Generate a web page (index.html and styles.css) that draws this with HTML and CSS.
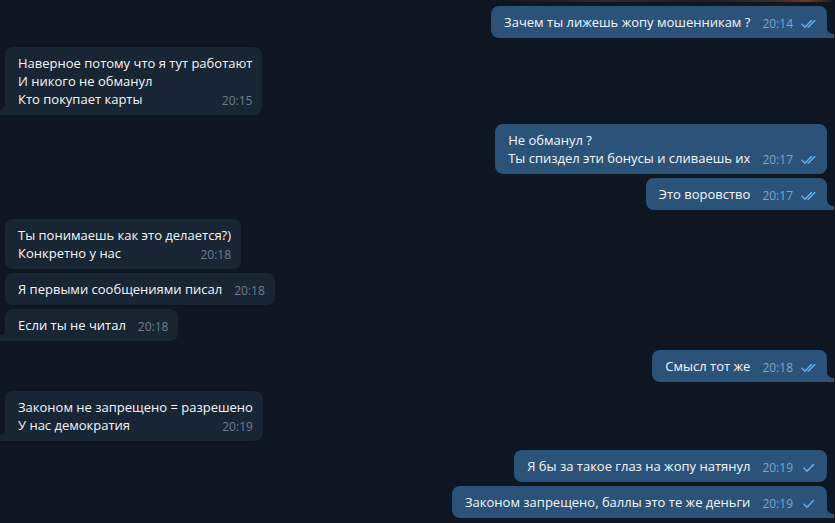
FILE: index.html
```html
<!DOCTYPE html>
<html lang="ru">
<head>
<meta charset="utf-8">
<title>Chat</title>
<link rel="stylesheet" href="styles.css">
</head>
<body>
<div class="chat">
  <div class="media-strip"></div>

  <div class="msg out tail">
    <div class="text">Зачем ты лижешь жопу мошенникам ?<span class="meta"><span class="time">20:14</span><svg class="check" viewBox="0 0 16 10"><path d="M1 5.2 L4 8.2 L10.5 1.5 M7.2 8.2 L13.8 1.5"/></svg></span></div>
  </div>

  <div class="msg in tail group-start">
    <div class="text">Наверное потому что я тут работают<br>И никого не обманул<br>Кто покупает карты<span class="meta"><span class="time">20:15</span></span></div>
  </div>

  <div class="msg out group-start">
    <div class="text">Не обманул ?<br>Ты спиздел эти бонусы и сливаешь их<span class="meta"><span class="time">20:17</span><svg class="check" viewBox="0 0 16 10"><path d="M1 5.2 L4 8.2 L10.5 1.5 M7.2 8.2 L13.8 1.5"/></svg></span></div>
  </div>
  <div class="msg out tail">
    <div class="text">Это воровство<span class="meta"><span class="time">20:17</span><svg class="check" viewBox="0 0 16 10"><path d="M1 5.2 L4 8.2 L10.5 1.5 M7.2 8.2 L13.8 1.5"/></svg></span></div>
  </div>

  <div class="msg in group-start">
    <div class="text">Ты понимаешь как это делается?)<br>Конкретно у нас<span class="meta"><span class="time">20:18</span></span></div>
  </div>
  <div class="msg in">
    <div class="text">Я первыми сообщениями писал<span class="meta"><span class="time">20:18</span></span></div>
  </div>
  <div class="msg in tail">
    <div class="text">Если ты не читал<span class="meta"><span class="time">20:18</span></span></div>
  </div>

  <div class="msg out tail group-start">
    <div class="text">Смысл тот же<span class="meta"><span class="time">20:18</span><svg class="check" viewBox="0 0 16 10"><path d="M1 5.2 L4 8.2 L10.5 1.5 M7.2 8.2 L13.8 1.5"/></svg></span></div>
  </div>

  <div class="msg in tail group-start">
    <div class="text">Законом не запрещено = разрешено<br>У нас демократия<span class="meta"><span class="time">20:19</span></span></div>
  </div>

  <div class="msg out group-start">
    <div class="text">Я бы за такое глаз на жопу натянул<span class="meta"><span class="time">20:19</span><svg class="check" viewBox="0 0 16 10"><path d="M3 5.2 L6 8.2 L12.5 1.5"/></svg></span></div>
  </div>
  <div class="msg out tail">
    <div class="text">Законом запрещено, баллы это те же деньги<span class="meta"><span class="time">20:19</span><svg class="check" viewBox="0 0 16 10"><path d="M3 5.2 L6 8.2 L12.5 1.5"/></svg></span></div>
  </div>
</div>
</body>
</html>
```

FILE: styles.css
```css
* { box-sizing: border-box; }

html, body {
  margin: 0;
  padding: 0;
  background: #0e1621;
  height: 100%;
  overflow: hidden;
}

body {
  font-family: "Open Sans", "Noto Sans", sans-serif;
  font-size: 13px;
  color: #f5f7f9;
}

.chat {
  display: flex;
  flex-direction: column;
  gap: 4px;
}

.media-strip {
  align-self: flex-end;
  width: 324px;
  height: 2px;
  margin-right: 3px;
  background: linear-gradient(90deg, #15171a 0%, #2a2b2d 30%, #1d1f22 60%, #3a2a22 82%, #6a3a22 92%, #2a1c16 100%);
}

.group-start { margin-top: 5px; }

.msg {
  position: relative;
  max-width: 480px;
  padding: 7px 10px 7px 13px;
  border-radius: 8px;
  line-height: 18px;
}

.msg.out {
  align-self: flex-end;
  margin-right: 8px;
  background: #2b5278;
}

.msg.in {
  align-self: flex-start;
  margin-left: 5px;
  background: #182533;
}

.text {
  white-space: nowrap;
}

.meta {
  float: right;
  display: flex;
  align-items: center;
  gap: 8px;
  margin-left: 12px;
  position: relative;
  top: 2px;
  font-size: 12px;
}

.out .time { color: #7da8d3; }
.in .time { color: #6d7f8f; }

.check {
  width: 16px;
  height: 10px;
  fill: none;
  stroke: #64b1ee;
  stroke-width: 1.5;
  stroke-linecap: round;
  stroke-linejoin: round;
}

.msg.tail.out { border-bottom-right-radius: 0; }
.msg.tail.in { border-bottom-left-radius: 0; }

.msg.tail.out::after {
  content: "";
  position: absolute;
  right: -7px;
  bottom: 0;
  width: 7px;
  height: 11px;
  background: radial-gradient(circle at 100% 0, transparent 7px, #2b5278 7.5px);
}

.msg.tail.in::after {
  content: "";
  position: absolute;
  left: -5px;
  bottom: 0;
  width: 5px;
  height: 11px;
  background: radial-gradient(circle at 0 0, transparent 5px, #182533 5.5px);
}
```
